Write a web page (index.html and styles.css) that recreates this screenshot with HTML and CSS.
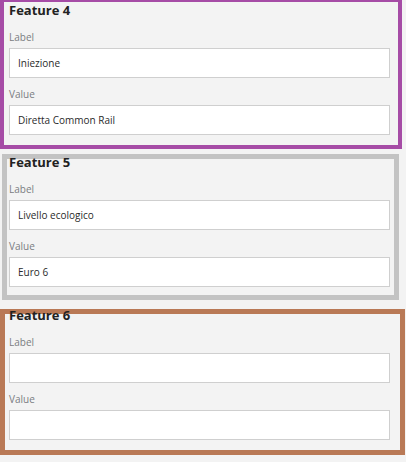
FILE: index.html
```html
<!DOCTYPE html>
<html>
<head>
<meta charset="utf-8">
<link rel="stylesheet" href="styles.css">
</head>
<body>
<div class="list">
  <section class="card card-purple">
    <h3 class="title">Feature 4</h3>
    <label class="field-label">Label</label>
    <div class="input">Iniezione</div>
    <label class="field-label field-gap">Value</label>
    <div class="input">Diretta Common Rail</div>
  </section>
  <section class="card card-gray">
    <h3 class="title">Feature 5</h3>
    <label class="field-label">Label</label>
    <div class="input">Livello ecologico</div>
    <label class="field-label field-gap">Value</label>
    <div class="input">Euro 6</div>
  </section>
  <section class="card card-brown">
    <h3 class="title">Feature 6</h3>
    <label class="field-label">Label</label>
    <div class="input"></div>
    <label class="field-label field-gap">Value</label>
    <div class="input"></div>
  </section>
</div>
</body>
</html>
```
FILE: styles.css
```css
html, body {
  margin: 0;
  padding: 0;
  background: #f3f3f3;
  font-family: "Open Sans", "Noto Sans", sans-serif;
}
.list {
  display: flex;
  flex-direction: column;
  width: 406px;
}
.card {
  display: flex;
  flex-direction: column;
  background: #f3f3f3;
  border-style: solid;
  box-sizing: border-box;
}
.card-purple {
  border-color: #a64ca6;
  border-width: 2px 4px 4px 4px;
  width: 402px;
  padding: 3px 8px 10px 5px;
}
.card-gray {
  border-color: #c3c3c3;
  border-width: 5px;
  width: 397px;
  margin-left: 2px;
  margin-top: 5px;
  padding: 0px 9px 8px 2px;
}
.card-gray .title {
  margin-top: -6px;
}
.card-brown {
  border-color: #b97956;
  border-width: 5px;
  width: 405px;
  margin-top: 9px;
  padding: 0 15px 10px 4px;
}
.card-brown .title {
  margin-top: -8px;
}
.title {
  margin: -4px 0 0 0;
  font-size: 13px;
  line-height: 18px;
  font-weight: 700;
  color: #222;
}
.field-label {
  display: block;
  margin-top: 11px;
  font-size: 10px;
  line-height: 14px;
  color: #7a7d82;
}
.field-gap {
  margin-top: 9px;
}
.input {
  margin-top: 4px;
  width: 381px;
  height: 30px;
  box-sizing: border-box;
  border: 1px solid #cfcfcf;
  background: #fff;
  padding: 0 8px;
  font-size: 10px;
  line-height: 28px;
  color: #2a2a2a;
}
```
